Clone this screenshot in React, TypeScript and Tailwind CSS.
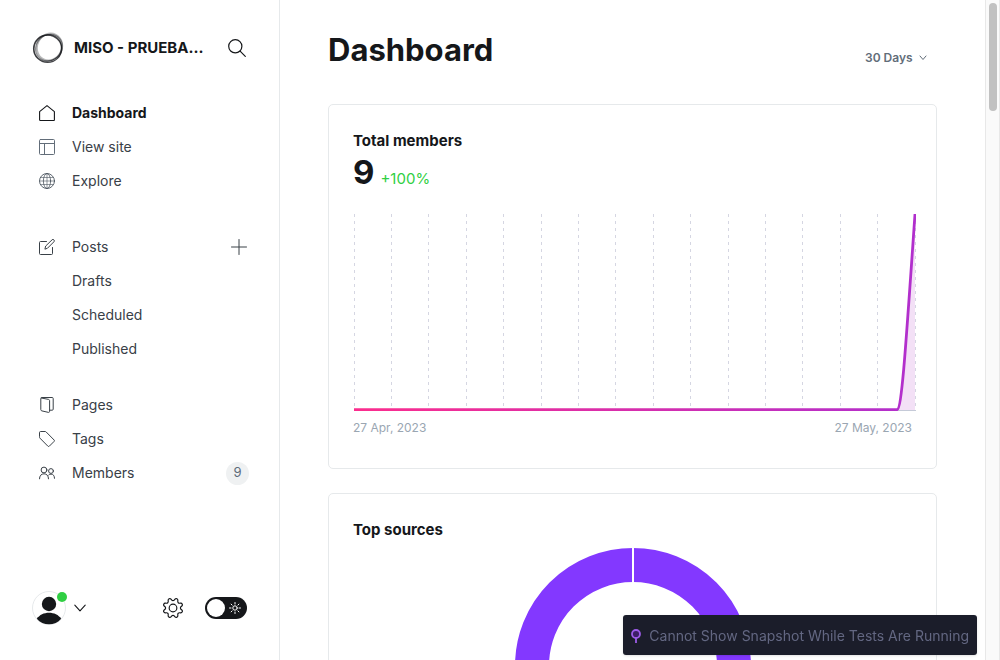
import type { ReactNode } from 'react';

const stroke = {
  fill: 'none',
  stroke: 'currentColor',
  strokeLinecap: 'round' as const,
  strokeLinejoin: 'round' as const,
};

function Icon({ children, className = '' }: { children: ReactNode; className?: string }) {
  return (
    <svg viewBox="0 0 16 16" className={`size-4 shrink-0 ${className}`} aria-hidden="true" {...stroke}>
      {children}
    </svg>
  );
}

const HomeIcon = (
  <Icon>
    <path strokeWidth="1.1" d="M.6 6.6 8 .6l7.4 6v8.1a.8.8 0 0 1-.8.8H1.4a.8.8 0 0 1-.8-.8z" />
  </Icon>
);

const LayoutIcon = (
  <Icon className="text-[#626d79]">
    <rect x=".5" y=".5" width="15" height="15" rx="1" />
    <path d="M.5 4.5h15M5.5 4.5v11" />
  </Icon>
);

const GlobeIcon = (
  <Icon className="text-[#4c5660]">
    <circle cx="8" cy="8" r="7.5" strokeWidth=".9" />
    <ellipse cx="8" cy="8" rx="3.6" ry="7.5" strokeWidth=".8" />
    <path d="M8 .5v15M.5 8h15M1.8 4.5h12.4M1.8 11.5h12.4" strokeWidth=".6" />
  </Icon>
);

const PostsIcon = (
  <Icon>
    <path d="M13.5 8.5v6a1 1 0 0 1-1 1h-11a1 1 0 0 1-1-1v-11a1 1 0 0 1 1-1h6" />
    <path d="m6 9.8.7-2.8L13 .9a1.2 1.2 0 0 1 1.9 0 1.3 1.3 0 0 1 0 1.9L8.7 9z" />
  </Icon>
);

const PagesIcon = (
  <Icon>
    <path d="m2.3 1 7.3 1.4c.6.2 1 .6 1 1.2v10.8c0 .7-.5 1.1-1.1 1l-6.6-1.5c-.7-.2-1.1-.6-1.1-1.2V1.5a1 1 0 0 1 1-1h10.4a1 1 0 0 1 1 1v10.7a1 1 0 0 1-1 1h-2.4" />
  </Icon>
);

const TagIcon = (
  <Icon>
    <path d="M.5 1.4a.9.9 0 0 1 .9-.9h4.7c.4 0 .7.1 1 .4l8 8.1a1 1 0 0 1 0 1.4l-4.8 4.8a1 1 0 0 1-1.4 0L.9 7.1a1.3 1.3 0 0 1-.4-1z" />
  </Icon>
);

const MembersIcon = (
  <Icon>
    <circle cx="5" cy="5" r="2.9" />
    <circle cx="12" cy="6" r="2.4" />
    <path d="M.5 13.8c0-3.1 1.8-5 4.5-5s4.5 1.9 4.5 5M9.7 10a3.4 3.4 0 0 1 2.3-.9c2.2 0 3.5 1.6 3.5 4.2" />
  </Icon>
);

function SidebarLogo() {
  return (
    <svg viewBox="0 0 32 32" className="size-8 shrink-0 text-[#15171a]" aria-hidden="true" fill="none" stroke="currentColor">
      <ellipse cx="15.6" cy="16.7" rx="14" ry="13.7" strokeWidth="1.3" opacity=".8" />
      <ellipse cx="15.8" cy="16" rx="14" ry="13" strokeWidth="1" opacity=".6" transform="rotate(-35 15.8 16)" />
      <ellipse cx="17.5" cy="15" rx="12.4" ry="13.6" strokeWidth="2" opacity=".3" transform="rotate(28 17.5 15)" />
      <ellipse cx="17" cy="15.6" rx="12.6" ry="14" strokeWidth="1.2" opacity=".45" transform="rotate(50 17 15.6)" />
    </svg>
  );
}

function NavLink({ icon, label, active = false, extra }: { icon?: ReactNode; label: string; active?: boolean; extra?: ReactNode }) {
  return (
    <li className="flex h-[34px] items-center justify-between">
      <a
        href="#"
        className={`flex items-center gap-[17px] text-sm ${active ? 'font-bold text-[#15171a]' : 'text-[#394047]'}`}
      >
        <span className="flex size-4 shrink-0">{icon}</span>
        {label}
      </a>
      {extra}
    </li>
  );
}

function Sidebar() {
  return (
    <aside className="flex w-[280px] shrink-0 flex-col border-r border-[#e6e9eb] px-8 py-8">
      <header className="flex h-8 items-center">
        <SidebarLogo />
        <span className="ml-[10px] truncate text-[15px] font-bold">MISO - PRUEBA...</span>
        <button type="button" aria-label="Search" className="mr-px ml-auto">
          <svg viewBox="0 0 18 18" className="size-[18px]" aria-hidden="true" {...stroke} strokeWidth="1.2">
            <circle cx="7.3" cy="7.3" r="6.6" />
            <path d="m12.1 12.1 5.2 5.2" />
          </svg>
        </button>
      </header>

      <nav className="mt-8 pl-[7px]" aria-label="Main">
        <ul>
          <NavLink icon={HomeIcon} label="Dashboard" active />
          <NavLink icon={LayoutIcon} label="View site" />
          <NavLink icon={GlobeIcon} label="Explore" />
        </ul>
        <ul className="mt-8">
          <NavLink
            icon={PostsIcon}
            label="Posts"
            extra={
              <button type="button" aria-label="New post" className="text-[#394047]">
                <Icon>
                  <path d="M8 .5v15M.5 8h15" />
                </Icon>
              </button>
            }
          />
          <NavLink label="Drafts" />
          <NavLink label="Scheduled" />
          <NavLink label="Published" />
        </ul>
        <ul className="mt-[22px]">
          <NavLink icon={PagesIcon} label="Pages" />
          <NavLink icon={TagIcon} label="Tags" />
          <NavLink
            icon={MembersIcon}
            label="Members"
            extra={
              <span className="-mr-0.5 flex size-[23px] items-center justify-center rounded-full bg-[#eff1f2] text-[13px] text-[#5d6b7a]">9</span>
            }
          />
        </ul>
      </nav>

      <footer className="mt-auto flex h-10 items-center">
        <button type="button" aria-label="Account menu" className="flex items-center gap-2">
          <span className="relative">
            <svg viewBox="0 0 34 34" className="size-[34px]" aria-hidden="true">
              <circle cx="17" cy="17" r="16.5" fill="white" stroke="#e6e9eb" />
              <circle cx="17" cy="13" r="7.2" fill="#15171a" />
              <path d="M4.8 27.8C7.5 23.8 12 21.8 17 21.8s9.5 2 12.2 6C26 31.6 21.8 33.3 17 33.3S8 31.6 4.8 27.8z" fill="#15171a" />
            </svg>
            <span className="absolute top-px -right-px size-[10px] rounded-full bg-[#30cf43]" />
          </span>
          <svg viewBox="0 0 12 8" className="h-2 w-3" aria-hidden="true" {...stroke} strokeWidth="1.1">
            <path d="m.8 1.2 5.2 5.6 5.2-5.6" />
          </svg>
        </button>
        <a href="#" aria-label="Settings" className="ml-auto text-[#15171a]">
          <svg viewBox="0 0 24 24" className="size-5" aria-hidden="true" {...stroke} strokeWidth="1.4">
            <path d="M10.546 2.438a1.957 1.957 0 0 0 2.908 0L14.4 1.4a1.959 1.959 0 0 1 3.41 1.413l-.071 1.4a1.958 1.958 0 0 0 2.051 2.054l1.4-.071a1.959 1.959 0 0 1 1.41 3.41l-1.042.94a1.96 1.96 0 0 0 0 2.909l1.042.94a1.959 1.959 0 0 1-1.413 3.41l-1.4-.071a1.958 1.958 0 0 0-2.056 2.056l.071 1.4A1.959 1.959 0 0 1 14.4 22.6l-.941-1.041a1.959 1.959 0 0 0-2.908 0L9.6 22.6A1.959 1.959 0 0 1 6.192 21.2l.072-1.4a1.958 1.958 0 0 0-2.056-2.056l-1.4.071A1.958 1.958 0 0 1 1.4 14.4l1.041-.94a1.96 1.96 0 0 0 0-2.909L1.4 9.6a1.959 1.959 0 0 1 1.41-3.41l1.4.071a1.958 1.958 0 0 0 2.054-2.048l-.072-1.4A1.958 1.958 0 0 1 9.6 1.4z" />
            <circle cx="12" cy="12" r="4.6" />
          </svg>
        </a>
        <label className="relative ml-[22px] flex">
          <input
            type="checkbox"
            role="switch"
            aria-label="Night shift"
            className="h-[22px] w-[42px] appearance-none rounded-full bg-[#15171a] before:m-0.5 before:block before:size-[18px] before:rounded-full before:bg-white"
          />
          <svg viewBox="0 0 12 12" className="pointer-events-none absolute top-[5px] right-[6px] size-3 text-white" aria-hidden="true" {...stroke} strokeWidth="1">
            <circle cx="6" cy="6" r="2.2" />
            <path d="M6 .5v1.5M6 10v1.5M.5 6H2M10 6h1.5M2.1 2.1l1 1M8.9 8.9l1 1M2.1 9.9l1-1M8.9 3.1l1-1" />
          </svg>
        </label>
      </footer>
    </aside>
  );
}

const gridLines = Array.from({ length: 16 }, (_, i) => Math.floor(i * 37.4) + 1.5);

function MembersChart() {
  return (
    <svg viewBox="0 0 563 198" className="w-full" role="img" aria-label="Total members over the last 30 days">
      <defs>
        <linearGradient id="line" x1="0" x2="563" y1="0" y2="0" gradientUnits="userSpaceOnUse">
          <stop offset="0" stopColor="#fb2d8d" />
          <stop offset="1" stopColor="#b12fcd" />
        </linearGradient>
      </defs>
      {gridLines.map((x) => (
        <path key={x} d={`M${x} 1v195`} stroke="#d5d6e2" strokeDasharray="3 4" />
      ))}
      <path d="M1 197.5h562" stroke="#c5cad8" />
      <path d="M544 197C550 190 553 130 562 1V197z" fill="#f3e0f6" />
      <path d="M1 196.7H544C549 196 553 130 562 1" fill="none" stroke="url(#line)" strokeWidth="2.8" />
    </svg>
  );
}

function Card({ title, children }: { title: string; children: ReactNode }) {
  return (
    <section className="shrink-0 rounded-[5px] border border-[#e6e9eb] p-6">
      <h2 className="text-[15px] leading-6 font-bold">{title}</h2>
      {children}
    </section>
  );
}

function Main() {
  return (
    <main className="flex min-w-0 flex-1 flex-col gap-6 overflow-hidden px-12 pt-7">
      <header className="flex h-13 shrink-0 items-center justify-between">
        <h1 className="pb-2 text-[31px] leading-10 font-bold">Dashboard</h1>
        <div className="relative mt-2 mr-[10px] flex items-center">
          <select aria-label="Date range" className="w-[62px] appearance-none bg-transparent text-xs leading-5 font-semibold text-[#626d79]">
            <option>30 Days</option>
            <option>90 Days</option>
          </select>
          <svg viewBox="0 0 8 6" className="pointer-events-none absolute right-0 h-1.5 w-2 text-[#626d79]" aria-hidden="true" {...stroke}>
            <path d="m1 1 3 3.5L7 1" />
          </svg>
        </div>
      </header>

      <Card title="Total members">
        <p className="flex items-baseline gap-1.5 leading-[38px]">
          <span className="text-[33px] font-bold">9</span>
          <span className="text-[15px] text-[#30cf43]">+100%</span>
        </p>
        <div className="mt-[15px] -mr-1">
          <MembersChart />
          <div className="mt-[9px] mr-1 flex justify-between pb-2 text-xs leading-4 text-[#9aa6b2]">
            <span>27 Apr, 2023</span>
            <span>27 May, 2023</span>
          </div>
        </div>
      </Card>

      <Card title="Top sources">
        <svg viewBox="0 0 236 236" className="mx-auto mt-1.5 w-[236px]" role="img" aria-label="Top sources">
          <circle cx="118" cy="118" r="101" fill="none" stroke="#8338ff" strokeWidth="34" />
          <path d="M118 0v36" stroke="white" strokeWidth="2" />
        </svg>
      </Card>
    </main>
  );
}

export default function App() {
  return (
    <div className="flex h-screen overflow-hidden bg-white font-[Inter,sans-serif] text-[#15171a]">
      <Sidebar />
      <Main />
      <div className="w-[15px] shrink-0 border-x border-[#e8e8e8] bg-[#fafafa] px-[3px] pt-[3px]" aria-hidden="true">
        <div className="h-27 w-2 rounded-full bg-[#c1c1c1]" />
      </div>
      <div role="status" className="fixed right-[23px] bottom-[5px] flex h-10 items-center gap-2 rounded-[3px] bg-[#1b1d2a] px-2 pt-0.5 text-sm text-[#636782] shadow">
        <svg viewBox="0 0 10 14" className="h-3.5 w-2.5" aria-hidden="true" fill="none" stroke="#9d5ce8">
          <circle cx="5" cy="5" r="4" fill="#3d1f66" strokeWidth="1.8" />
          <path d="M5 9v5" strokeWidth="1.8" />
        </svg>
        Cannot Show Snapshot While Tests Are Running
      </div>
    </div>
  );
}
